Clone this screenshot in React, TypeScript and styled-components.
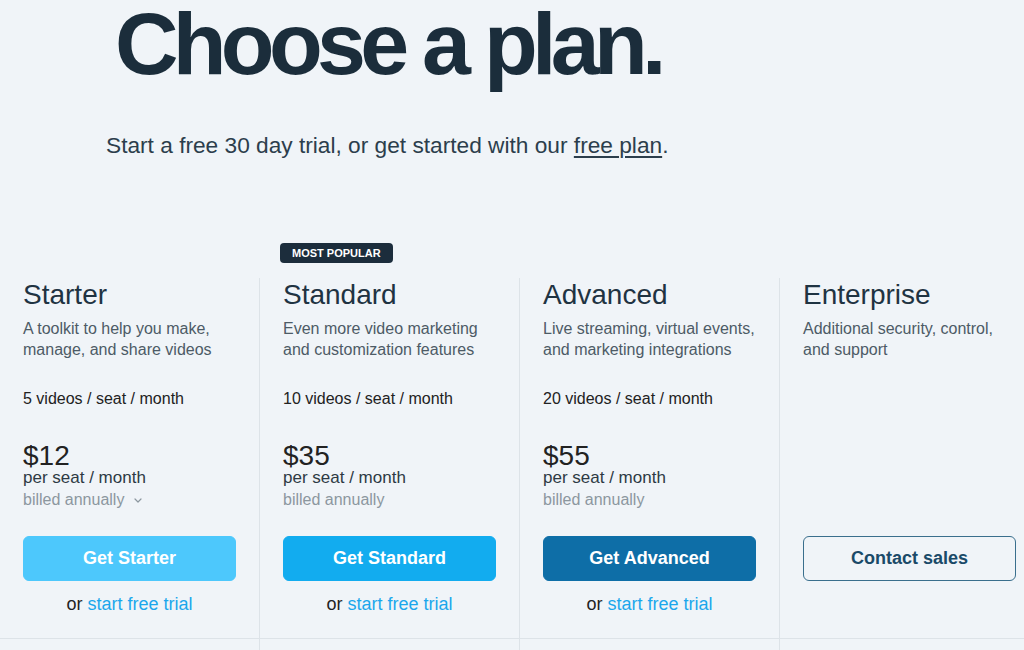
import React from 'react';
import styled, { createGlobalStyle } from 'styled-components';

const GlobalStyle = createGlobalStyle`
  html, body {
    margin: 0;
    padding: 0;
    background: #f0f4f8;
    font-family: 'Liberation Sans', Arial, Helvetica, sans-serif;
    overflow: hidden;
  }
`;

const Page = styled.div`
  width: 1024px;
  height: 650px;
  overflow: hidden;
  background: #f0f4f8;
`;

const Header = styled.header`
  padding-left: 106px;
`;

const Title = styled.h1`
  margin: 0;
  padding-left: 9px;
  font-size: 88px;
  line-height: 88px;
  font-weight: 700;
  letter-spacing: -0.065em;
  color: #1b2d3b;
  white-space: nowrap;
`;

const Subtitle = styled.p`
  margin: 42px 0 0;
  font-size: 22.7px;
  line-height: 30px;
  color: #2c3e4c;

  a {
    color: inherit;
    text-decoration: underline;
    text-decoration-thickness: 2px;
    text-underline-offset: 3px;
  }
`;

const Plans = styled.div`
  display: grid;
  grid-template-columns: repeat(4, 260px);
  margin-top: 118px;
`;

const Column = styled.section`
  position: relative;
  border-right: 1px solid #dde3e8;
  height: 400px;
`;

const Badge = styled.span`
  position: absolute;
  top: -35px;
  left: 20px;
  height: 20px;
  padding: 0 12px;
  border-radius: 4px;
  background: #1c2d3c;
  color: #fff;
  font-size: 11px;
  font-weight: 700;
  line-height: 20px;
  white-space: nowrap;
`;

const Top = styled.div`
  box-sizing: border-box;
  height: 361px;
  display: flex;
  flex-direction: column;
  padding: 0 23px 24px;
  border-bottom: 1px solid #dde3e8;
`;

const PlanName = styled.h2`
  margin: 0;
  font-size: 28px;
  line-height: 34px;
  font-weight: 400;
  color: #1f3342;
`;

const Description = styled.p`
  margin: 6px 0 0;
  font-size: 16px;
  line-height: 21px;
  color: #4d5b66;
`;

const Quota = styled.div`
  margin-top: 28px;
  font-size: 16px;
  line-height: 21px;
  color: #222;
`;

const Price = styled.div`
  margin-top: 33px;
  font-size: 28px;
  line-height: 28px;
  color: #222;
`;

const PerSeat = styled.div`
  margin-top: 1px;
  font-size: 17px;
  line-height: 14px;
  color: #2d3a44;
`;

const Billing = styled.div`
  display: flex;
  align-items: center;
  margin-top: 5px;
  font-size: 16px;
  line-height: 20px;
  color: #8c979f;

  svg {
    margin-left: 10px;
  }
`;

const Cta = styled.div`
  margin-top: auto;
`;

type Variant = 'light' | 'mid' | 'dark' | 'outline';

const buttonBg: Record<Variant, string> = {
  light: '#4dc8fc',
  mid: '#12acef',
  dark: '#0e6ea7',
  outline: 'transparent',
};

const Button = styled.button<{ $variant: Variant }>`
  display: block;
  box-sizing: border-box;
  width: 100%;
  height: 45px;
  border-radius: 6px;
  border: 1px solid ${({ $variant }) => ($variant === 'outline' ? '#3a6f8d' : buttonBg[$variant])};
  background: ${({ $variant }) => buttonBg[$variant]};
  color: ${({ $variant }) => ($variant === 'outline' ? '#1a4a68' : '#fff')};
  font-family: inherit;
  font-size: 18px;
  font-weight: 700;
  cursor: pointer;
`;

const Trial = styled.div`
  margin-top: 11px;
  height: 22px;
  text-align: center;
  font-size: 18px;
  line-height: 24px;
  color: #222;

  a {
    color: #1ba7ec;
    text-decoration: none;
  }
`;

const Chevron = () => (
  <svg width="8" height="5" viewBox="0 0 8 5" fill="none">
    <path d="M1 1l3 3 3-3" stroke="#8c979f" strokeWidth="1.2" strokeLinecap="round" strokeLinejoin="round" />
  </svg>
);

type Plan = {
  name: string;
  desc: [string, string];
  quota?: string;
  price?: string;
  chevron?: boolean;
  popular?: boolean;
  cta: string;
  variant: Variant;
  trial: boolean;
};

const plans: Plan[] = [
  {
    name: 'Starter',
    desc: ['A toolkit to help you make,', 'manage, and share videos'],
    quota: '5 videos / seat / month',
    price: '$12',
    chevron: true,
    cta: 'Get Starter',
    variant: 'light',
    trial: true,
  },
  {
    name: 'Standard',
    desc: ['Even more video marketing', 'and customization features'],
    quota: '10 videos / seat / month',
    price: '$35',
    popular: true,
    cta: 'Get Standard',
    variant: 'mid',
    trial: true,
  },
  {
    name: 'Advanced',
    desc: ['Live streaming, virtual events,', 'and marketing integrations'],
    quota: '20 videos / seat / month',
    price: '$55',
    cta: 'Get Advanced',
    variant: 'dark',
    trial: true,
  },
  {
    name: 'Enterprise',
    desc: ['Additional security, control,', 'and support'],
    cta: 'Contact sales',
    variant: 'outline',
    trial: false,
  },
];

export default function App() {
  return (
    <Page>
      <GlobalStyle />
      <Header>
        <Title>Choose a plan.</Title>
        <Subtitle>
          Start a free 30 day trial, or get started with our <a href="#">free plan</a>.
        </Subtitle>
      </Header>
      <Plans>
        {plans.map((p) => (
          <Column key={p.name}>
            {p.popular && <Badge>MOST POPULAR</Badge>}
            <Top>
              <PlanName>{p.name}</PlanName>
              <Description>
                {p.desc[0]}
                <br />
                {p.desc[1]}
              </Description>
              {p.quota && <Quota>{p.quota}</Quota>}
              {p.price && (
                <>
                  <Price>{p.price}</Price>
                  <PerSeat>per seat / month</PerSeat>
                  <Billing>
                    billed annually
                    {p.chevron && <Chevron />}
                  </Billing>
                </>
              )}
              <Cta>
                <Button $variant={p.variant}>{p.cta}</Button>
                <Trial>
                  {p.trial && (
                    <>
                      or <a href="#">start free trial</a>
                    </>
                  )}
                </Trial>
              </Cta>
            </Top>
          </Column>
        ))}
      </Plans>
    </Page>
  );
}
